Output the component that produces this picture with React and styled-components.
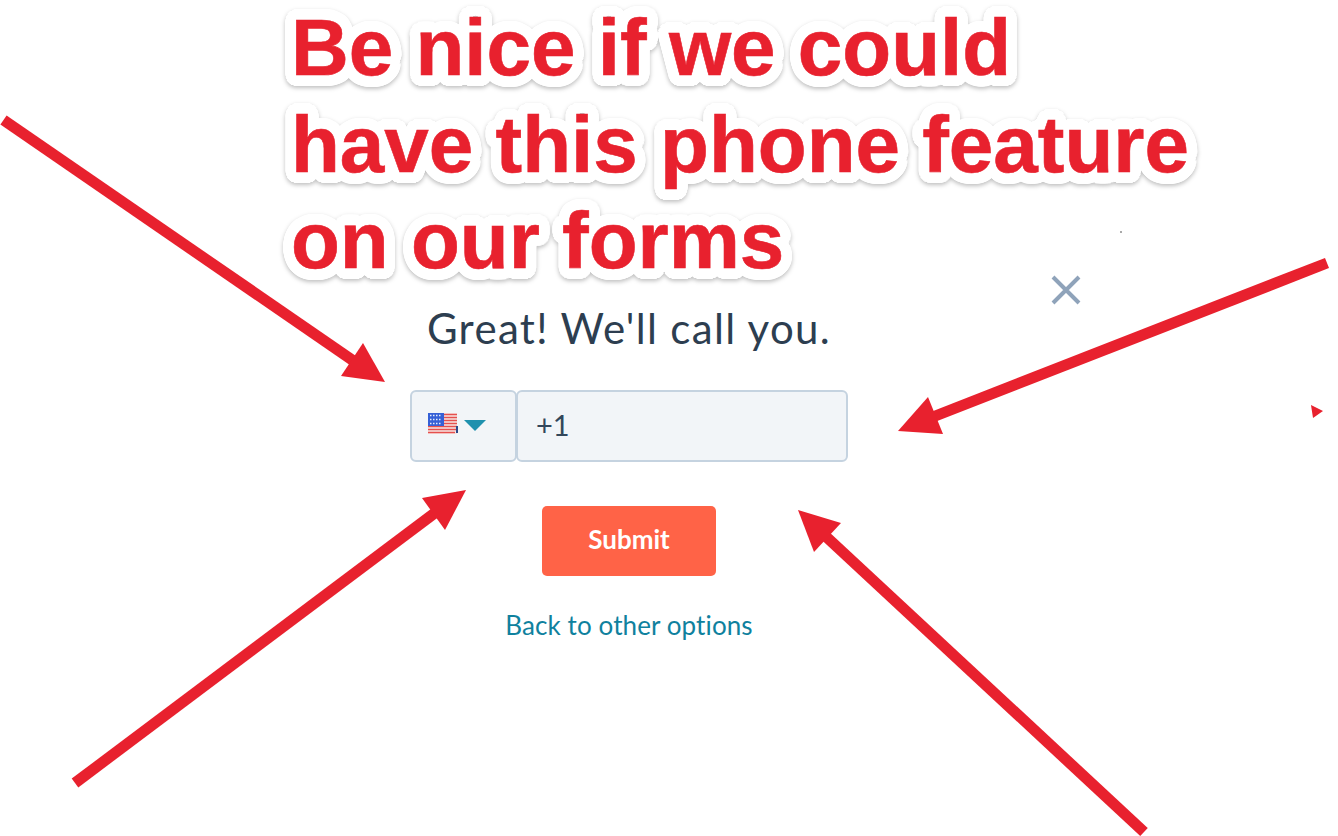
import React from 'react';
import styled, { createGlobalStyle } from 'styled-components';

const RED = '#e8212e';

// round white sticker outline round the annotation text
const outline = () => {
	const parts = [];
	for (let i = 0; i < 48; i++) {
		const a = (i / 48) * Math.PI * 2;
		parts.push(`${(Math.cos(a) * 11).toFixed(1)}px ${(Math.sin(a) * 11).toFixed(1)}px 0 #fff`);
	}
	return parts.join(', ');
};

const ARROWS = [
	{ shaft: [3.5, 120, 358, 364], head: '385,382 363,343 341,376' },
	{ shaft: [1327, 263, 925, 420], head: '898,431 928,397 943,434' },
	{ shaft: [75, 783, 440, 509], head: '466,490 422,498 445,530' },
	{ shaft: [1144, 832, 820, 531], head: '798,510 841,523 814,552' },
];

const App = () => {
	return (
		<Page>
			<GlobalStyle />
			<Note>
				<NoteLine>Be nice if we could</NoteLine>
				<NoteLine>have this phone feature</NoteLine>
				<NoteLine>on our forms</NoteLine>
			</Note>

			<Dialog>
				<CloseButton aria-label="Close">
					<svg width="30" height="30" viewBox="0 0 30 30">
						<path d="M2 2 L28 28 M28 2 L2 28" stroke="#8fa3ba" strokeWidth="4" fill="none" />
					</svg>
				</CloseButton>
				<Title>Great! We'll call you.</Title>
				<PhoneRow>
					<CountryButton>
						<FlagBox>
							<Flag />
						</FlagBox>
						<Caret />
					</CountryButton>
					<PhoneInput>+1</PhoneInput>
				</PhoneRow>
				<SubmitButton>Submit</SubmitButton>
				<BackLink>Back to other options</BackLink>
			</Dialog>

			<Overlay width="1338" height="836" viewBox="0 0 1338 836">
				{ARROWS.map((arrow) => (
					<g key={arrow.head}>
						<line
							x1={arrow.shaft[0]}
							y1={arrow.shaft[1]}
							x2={arrow.shaft[2]}
							y2={arrow.shaft[3]}
							stroke={RED}
							strokeWidth="11"
						/>
						<polygon points={arrow.head} fill={RED} />
					</g>
				))}
				<polygon points="1311,405 1323,411 1313,418" fill={RED} />
				<line x1="1120" y1="232" x2="1122" y2="232" stroke="#555" strokeWidth="1" />
			</Overlay>
		</Page>
	);
};

const Flag = () => (
	<svg width="30" height="21" viewBox="0 0 30 21">
		<rect width="29" height="21" fill="#f6e6e4" />
		<path
			d="M0 1.5H29M0 4.5H29M0 7.5H29M0 10.5H29M0 13.5H29M0 16.5H29M0 19.5H27"
			stroke="#e5504e"
			strokeWidth="1.7"
		/>
		<rect width="16" height="13" fill="#3560d6" />
		<path d="M2 2.5h12M2 6.5h12M2 10.5h12" stroke="#e6ecfb" strokeWidth="1.4" strokeDasharray="1.5 1.5" />
		<rect x="28" y="13" width="2" height="7" fill="#2c4a8a" />
	</svg>
);

const GlobalStyle = createGlobalStyle`
	html, body {
		margin: 0;
		padding: 0;
		background: #fff;
	}
`;

const Page = styled.div`
	position: relative;
	width: 1338px;
	height: 836px;
	overflow: hidden;
	background: #fff;
	font-family: 'Lato', 'Noto Sans', sans-serif;
`;

const Note = styled.div`
	padding-left: 291px;
	font-family: 'Liberation Sans', Arial, sans-serif;
	font-weight: 700;
	font-size: 80px;
	line-height: 96.5px;
	color: ${RED};
	-webkit-text-stroke: 0.6px ${RED};
	text-shadow: ${outline()};
	filter: drop-shadow(0 2px 2px rgba(0, 0, 0, 0.25));
`;

const NoteLine = styled.div`
	white-space: nowrap;
`;

const Dialog = styled.div`
	position: relative;
	display: flex;
	flex-direction: column;
	align-items: center;
	width: 438px;
	margin: 0 0 0 410px;
`;

const CloseButton = styled.div`
	position: absolute;
	top: -15px;
	left: 641px;
	line-height: 0;
`;

const Title = styled.div`
	margin-top: 10px;
	font-size: 42px;
	line-height: 56px;
	font-weight: 400;
	letter-spacing: 1.35px;
	color: #2d3e50;
	white-space: nowrap;
`;

const PhoneRow = styled.div`
	display: flex;
	width: 100%;
	height: 72px;
	margin-top: 34px;
`;

const CountryButton = styled.div`
	box-sizing: border-box;
	display: flex;
	align-items: center;
	gap: 6px;
	width: 107px;
	padding-left: 16px;
	background: #f2f5f8;
	border: 2px solid #c5d3e0;
	border-radius: 6px;
`;

const FlagBox = styled.div`
	line-height: 0;
	margin-bottom: 5px;
`;

const Caret = styled.div`
	width: 0;
	height: 0;
	border-left: 11px solid transparent;
	border-right: 11px solid transparent;
	border-top: 11px solid #1f91ae;
`;

const PhoneInput = styled.div`
	box-sizing: border-box;
	display: flex;
	align-items: center;
	flex: 1;
	margin-left: -1px;
	padding: 0 0 2px 18px;
	background: #f2f5f8;
	border: 2px solid #c5d3e0;
	border-radius: 6px;
	font-size: 29px;
	color: #33475b;
`;

const SubmitButton = styled.div`
	box-sizing: border-box;
	display: flex;
	align-items: center;
	justify-content: center;
	width: 174px;
	height: 70px;
	margin-top: 44px;
	padding-bottom: 4px;
	background: #ff6347;
	border-radius: 5px;
	color: #fff;
	font-size: 26px;
	font-weight: 700;
`;

const BackLink = styled.div`
	margin-top: 31px;
	font-size: 26px;
	line-height: 36px;
	letter-spacing: 0.1px;
	color: #0f819e;
	white-space: nowrap;
`;

const Overlay = styled.svg`
	position: absolute;
	top: 0;
	left: 0;
	pointer-events: none;
`;

export default App;
